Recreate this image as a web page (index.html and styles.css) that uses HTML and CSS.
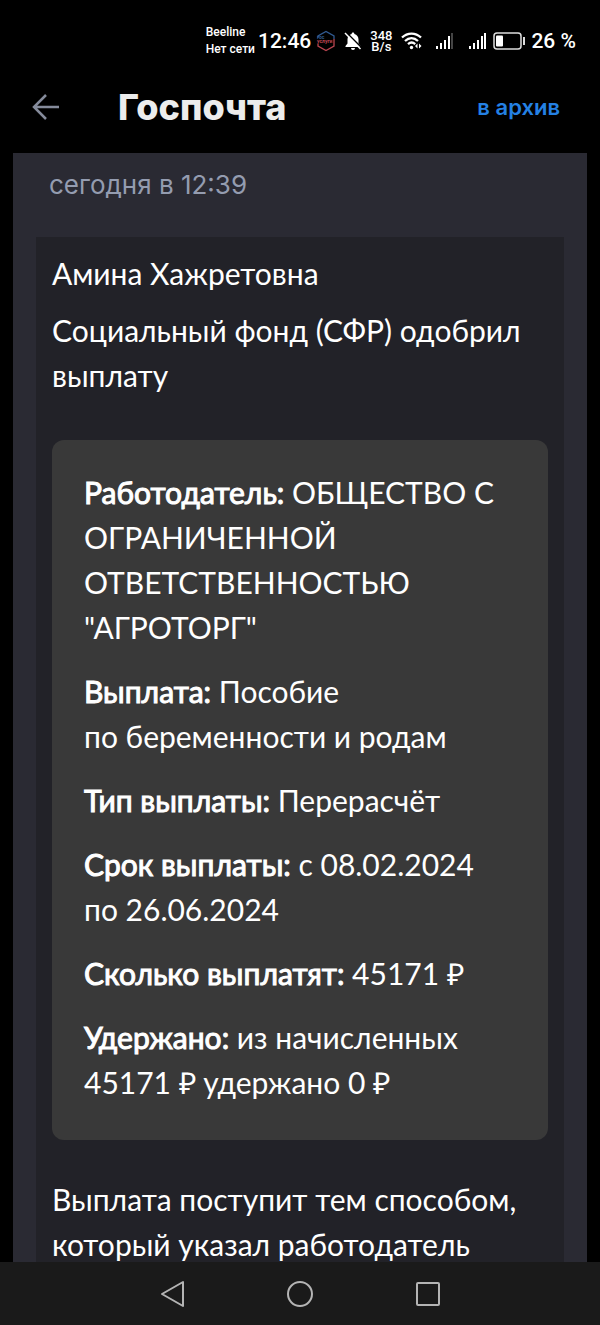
FILE: index.html
```html
<!DOCTYPE html>
<html lang="ru">
<head>
    <meta charset="UTF-8">
    <meta name="viewport" content="width=device-width, initial-scale=1.0">
    <title>Госпочта</title>
    <link rel="stylesheet" href="styles.css">
</head>
<body>
    <!-- Статус-бар -->
    <div class="status-bar">
        <div class="operator">
            <span>Beeline</span>
            <span>Нет сети</span>
        </div>
        <span class="time">12:46</span>
        <svg class="gos-icon" width="20" height="22" viewBox="0 0 20 22" fill="none" stroke-width="1.3">
            <path d="M2 8V6l8-4.500 8 4.500v3" stroke="#315b91"/>
            <path d="M18 9v7l-8 4.500L2 16v-2" stroke="#b94550"/>
            <text x="1" y="9" class="gos-top">гос</text>
            <text x="1" y="13" class="gos-bottom">услуги</text>
        </svg>
        <svg class="bell-icon" width="18" height="20" viewBox="0 0 18 20">
            <path d="M9 1.500c.9 0 1.400.6 1.400 1.500 2.500.7 4.100 2.700 4.100 5.500v4l2 2.500v1H1.500v-1l2-2.500v-4C3.500 5.700 5.100 3.700 7.600 3c0-.9.500-1.500 1.400-1.500z" fill="#fff"/>
            <path d="M7 17h4a2 2 0 0 1-4 0z" fill="#fff"/>
            <path d="M2.500 1.500L18 17" stroke="#000" stroke-width="1.500"/>
            <path d="M1 2l15.500 16" stroke="#fff" stroke-width="1.500"/>
        </svg>
        <div class="speed">
            <span>348</span>
            <span>B/s</span>
        </div>
        <svg class="wifi-icon" width="22" height="20" viewBox="0 0 22 20" fill="none" stroke="#fff" stroke-width="2.300">
            <path d="M1 6.500c5.500-5.300 13.500-5.300 19 0"/>
            <path d="M4 10c4-3.700 9-3.700 13 0"/>
            <path d="M7 13.200c2.200-2 5-2 7.200 0"/>
            <circle cx="10.500" cy="16.500" r="1.700" fill="#fff" stroke="none"/>
            <path d="M16.500 12.500v5l-2.500-2.500zM18 12.500v5l2.500-2.500z" fill="#fff" stroke="none"/>
        </svg>
        <svg class="signal-icon" width="19" height="18" viewBox="0 0 19 18" fill="#fff">
            <path d="M1 14h2v3H1zM5 11h2v6H5zM9 8h2v9H9zM13 4h2v13h-2z"/>
            <path d="M16 1h2v16h-2z" fill="#444"/>
        </svg>
        <svg class="signal-icon" width="19" height="18" viewBox="0 0 19 18" fill="#fff">
            <path d="M1 14h2v3H1zM5 11h2v6H5zM9 8h2v9H9zM13 4h2v13h-2zM16 1h2v16h-2z"/>
        </svg>
        <svg class="battery-icon" width="33" height="18" viewBox="0 0 33 18">
            <rect x="1" y="1" width="27" height="16" rx="3" fill="none" stroke="#ddd" stroke-width="1.500"/>
            <rect x="3" y="3.500" width="7" height="11" rx="1" fill="#fff"/>
            <path d="M31 5v8" stroke="#ddd" stroke-width="2"/>
        </svg>
        <span class="percent">26 %</span>
    </div>

    <!-- Шапка -->
    <header class="header">
        <button class="back" aria-label="Назад">
            <svg width="28" height="28" viewBox="0 0 28 28" fill="none" stroke="#858b9b" stroke-width="2.500">
                <path d="M27 14H2M14 2L2 14l12 12"/>
            </svg>
        </button>
        <h1>Госпочта</h1>
        <a class="archive" href="#">в архив</a>
    </header>

    <!-- Письмо -->
    <main class="content">
        <div class="date">сегодня в 12:39</div>
        <article class="letter">
            <p>Амина Хажретовна</p>
            <p>Социальный фонд (СФР) одобрил выплату</p>
            <div class="details">
                <p><b>Работодатель:</b> ОБЩЕСТВО С ОГРАНИЧЕННОЙ ОТВЕТСТВЕННОСТЬЮ "АГРОТОРГ"</p>
                <p><b>Выплата:</b> Пособие по&nbsp;беременности и&nbsp;родам</p>
                <p><b>Тип выплаты:</b> Перерасчёт</p>
                <p><b>Срок выплаты:</b> с&nbsp;08.02.2024 по&nbsp;26.06.2024</p>
                <p><b>Сколько выплатят:</b> 45171&nbsp;₽</p>
                <p><b>Удержано:</b> из&nbsp;начисленных 45171&nbsp;₽ удержано 0&nbsp;₽</p>
            </div>
            <p>Выплата поступит тем способом, который указал работодатель</p>
        </article>
    </main>

    <!-- Кнопки навигации -->
    <nav class="nav-bar">
        <button aria-label="Назад">
            <svg width="28" height="28" viewBox="0 0 28 28">
                <path d="M25 2v24L4 14z"/>
            </svg>
        </button>
        <button aria-label="Домой">
            <svg width="28" height="28" viewBox="0 0 28 28">
                <circle cx="14" cy="14" r="12"/>
            </svg>
        </button>
        <button aria-label="Недавние">
            <svg width="28" height="28" viewBox="0 0 28 28">
                <rect x="3" y="3" width="22" height="22" rx="1"/>
            </svg>
        </button>
    </nav>
</body>
</html>
```
FILE: styles.css
```css
* {
    box-sizing: border-box;
}
body {
    margin: 0;
    height: 100vh;
    display: flex;
    flex-direction: column;
    overflow: hidden;
    background-color: #000;
    color: #fff;
    font-family: Lato, sans-serif;
}
button {
    padding: 0;
    border: none;
    background: none;
    cursor: pointer;
}
svg {
    display: block;
    flex-shrink: 0;
}
.status-bar {
    display: flex;
    justify-content: flex-end;
    align-items: center;
    flex-shrink: 0;
    height: 64px;
    padding: 18px 24px 0 0;
    font-family: Roboto, sans-serif;
    font-weight: 500;
    white-space: nowrap;
}
.operator {
    display: flex;
    flex-direction: column;
    font-size: 12px;
    line-height: 17px;
}
.time {
    margin: 0 5px 0 3px;
    font-size: 21px;
}
.gos-icon {
    margin-right: 8px;
}
.gos-top, .gos-bottom {
    font-size: 5px;
    font-weight: bold;
}
.gos-top {
    fill: #315b91;
}
.gos-bottom {
    fill: #b94550;
}
.bell-icon {
    margin-right: 8px;
}
.speed {
    display: flex;
    flex-direction: column;
    align-items: center;
    margin-right: 9px;
    font-size: 13px;
    line-height: 11px;
}
.wifi-icon {
    margin-right: 12px;
}
.signal-icon {
    margin-right: 14px;
}
.signal-icon + .signal-icon {
    margin-right: 6px;
}
.battery-icon {
    margin-right: 5px;
}
.percent {
    font-size: 21px;
}
.header {
    display: flex;
    align-items: center;
    flex-shrink: 0;
    height: 89px;
    padding: 0 40px 4px 32px;
    font-family: Inter, sans-serif;
}
.header h1 {
    flex: 1;
    margin: 0 0 0 58px;
    color: #ececec;
    font-size: 36px;
    font-weight: 800;
}
.archive {
    color: #2481e4;
    font-size: 22px;
    font-weight: 600;
    text-decoration: none;
}
.content {
    flex: 1;
    min-height: 0;
    margin: 0 13px;
    padding: 0 23px;
    overflow: hidden;
    background-color: #2a2a33;
}
.date {
    height: 84px;
    padding: 16px 13px;
    color: #949cb0;
    font-family: Inter, sans-serif;
    font-size: 26px;
    line-height: 32px;
}
.letter {
    padding: 14px 16px;
    background-color: #222228;
    font-size: 30px;
    line-height: 45px;
}
.letter p {
    margin: 0 0 12px;
}
.details {
    margin: 42px 0 37px;
    padding: 30px 32px 35px;
    border-radius: 12px;
    background-color: #393939;
}
.details p {
    margin: 0 0 19px;
}
.details p:last-child {
    margin-bottom: 0;
}
/* утолщение обычного начертания */
.details b {
    font-weight: 400;
    -webkit-text-stroke: 1px #fff;
}
.nav-bar {
    display: flex;
    justify-content: center;
    align-items: center;
    gap: 100px;
    flex-shrink: 0;
    height: 63px;
    background-color: #1a1a1a;
}
.nav-bar svg {
    fill: none;
    stroke: #b4b4b4;
    stroke-width: 2;
    stroke-linejoin: round;
}
```
